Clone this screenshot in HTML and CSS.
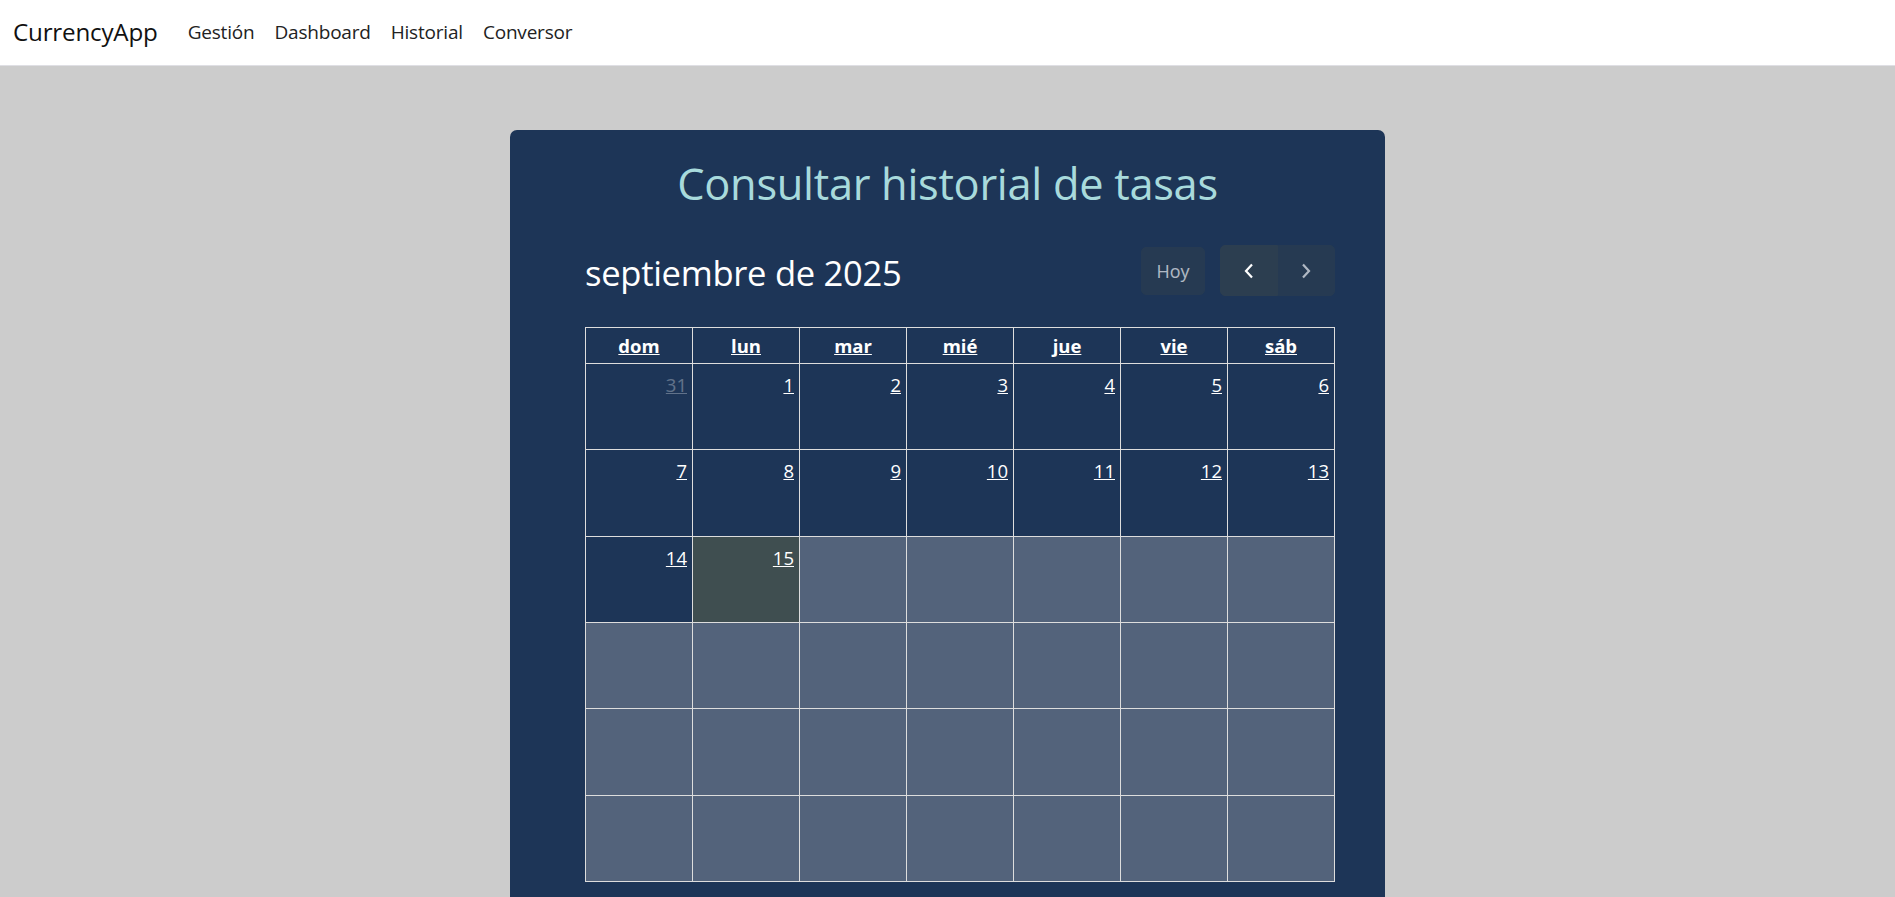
FILE: index.html
```html
<!DOCTYPE html>
<html lang="es">
<head>
<meta charset="utf-8">
<title>CurrencyApp - Historial</title>
<link rel="stylesheet" href="styles.css">
</head>
<body>
<nav class="navbar">
  <a class="brand" href="#">CurrencyApp</a>
  <ul class="nav-links">
    <li><a href="#">Gestión</a></li>
    <li><a href="#">Dashboard</a></li>
    <li><a href="#">Historial</a></li>
    <li><a href="#">Conversor</a></li>
  </ul>
</nav>
<main class="page">
  <section class="card">
    <h1 class="card-title">Consultar historial de tasas</h1>
    <div class="calendar">
      <div class="toolbar">
        <h2 class="cal-title">septiembre de 2025</h2>
        <div class="toolbar-actions">
          <button class="btn btn-today" disabled>Hoy</button>
          <div class="btn-group">
            <button class="btn btn-icon btn-prev" aria-label="Anterior">
              <svg width="12" height="16" viewBox="0 0 12 16"><path d="M9 1.5 L3 8 L9 14.5" fill="none" stroke="currentColor" stroke-width="2.2"/></svg>
            </button>
            <button class="btn btn-icon btn-next" disabled aria-label="Siguiente">
              <svg width="12" height="16" viewBox="0 0 12 16"><path d="M3 1.5 L9 8 L3 14.5" fill="none" stroke="currentColor" stroke-width="2.2"/></svg>
            </button>
          </div>
        </div>
      </div>
      <table class="month">
        <thead>
          <tr>
            <th><a href="#">dom</a></th>
            <th><a href="#">lun</a></th>
            <th><a href="#">mar</a></th>
            <th><a href="#">mié</a></th>
            <th><a href="#">jue</a></th>
            <th><a href="#">vie</a></th>
            <th><a href="#">sáb</a></th>
          </tr>
        </thead>
        <tbody>
          <tr>
            <td class="other"><a href="#">31</a></td>
            <td><a href="#">1</a></td>
            <td><a href="#">2</a></td>
            <td><a href="#">3</a></td>
            <td><a href="#">4</a></td>
            <td><a href="#">5</a></td>
            <td><a href="#">6</a></td>
          </tr>
          <tr>
            <td><a href="#">7</a></td>
            <td><a href="#">8</a></td>
            <td><a href="#">9</a></td>
            <td><a href="#">10</a></td>
            <td><a href="#">11</a></td>
            <td><a href="#">12</a></td>
            <td><a href="#">13</a></td>
          </tr>
          <tr>
            <td><a href="#">14</a></td>
            <td class="today"><a href="#">15</a></td>
            <td class="disabled"></td>
            <td class="disabled"></td>
            <td class="disabled"></td>
            <td class="disabled"></td>
            <td class="disabled"></td>
          </tr>
          <tr>
            <td class="disabled"></td><td class="disabled"></td><td class="disabled"></td><td class="disabled"></td><td class="disabled"></td><td class="disabled"></td><td class="disabled"></td>
          </tr>
          <tr>
            <td class="disabled"></td><td class="disabled"></td><td class="disabled"></td><td class="disabled"></td><td class="disabled"></td><td class="disabled"></td><td class="disabled"></td>
          </tr>
          <tr>
            <td class="disabled"></td><td class="disabled"></td><td class="disabled"></td><td class="disabled"></td><td class="disabled"></td><td class="disabled"></td><td class="disabled"></td>
          </tr>
        </tbody>
      </table>
    </div>
  </section>
</main>
</body>
</html>
```

FILE: styles.css
```css
* { box-sizing: border-box; }

html, body {
  margin: 0;
  padding: 0;
}

body {
  background: #cccccc;
  font-family: "Open Sans", "Noto Sans", "Liberation Sans", sans-serif;
  font-size: 20px;
  line-height: 1.5;
  color: #212529;
  overflow: hidden;
}

a { text-decoration: none; }

/* Navbar */
.navbar {
  height: 66px;
  background: #ffffff;
  border-bottom: 1px solid #dfdfe4;
  display: flex;
  align-items: center;
  padding: 0 13px;
}

.brand {
  font-size: 24.2px;
  color: #111111;
  margin-right: 20px;
  letter-spacing: -0.2px;
}

.nav-links {
  list-style: none;
  display: flex;
  margin: 0;
  padding: 0;
}

.nav-links a {
  display: block;
  padding: 8px 10px;
  font-size: 19px;
  color: #222222;
  letter-spacing: -0.2px;
}

/* Page */
.page {
  padding-top: 64px;
}

.card {
  width: 875px;
  margin: 0 auto;
  background: #1d3557;
  border-radius: 7px 7px 0 0;
  padding: 28px 50px 16px 75px;
}

.card-title {
  margin: 0 0 0 -25px;
  text-align: center;
  font-size: 43.4px;
  font-weight: 400;
  line-height: 1.2;
  color: #a8dadc;
  letter-spacing: -0.3px;
}

.calendar {
  margin-top: 35px;
}

.toolbar {
  display: flex;
  justify-content: space-between;
  align-items: center;
  margin-bottom: 31px;
}

.cal-title {
  margin: 0;
  padding-top: 5px;
  font-size: 34.6px;
  font-weight: 400;
  line-height: 1.2;
  color: #ffffff;
  letter-spacing: -0.3px;
}

.toolbar-actions {
  display: flex;
  align-items: center;
  gap: 15px;
}

.btn {
  font-family: inherit;
  font-size: 18px;
  line-height: 30px;
  color: #ffffff;
  background: #2c3e50;
  border: 1px solid #2c3e50;
  border-radius: 5px;
  padding: 8px 12px;
  cursor: pointer;
}

.btn:disabled {
  opacity: 0.65;
  cursor: default;
}

.btn-today {
  width: 64px;
  height: 48px;
  padding: 0;
}

.btn-group {
  display: flex;
}

.btn-icon {
  width: 57.5px;
  height: 51px;
  padding: 0;
  display: flex;
  align-items: center;
  justify-content: center;
}

.btn-prev {
  border-radius: 5px 0 0 5px;
}

.btn-next {
  border-radius: 0 5px 5px 0;
}

/* Month table */
.month {
  width: 750px;
  table-layout: fixed;
  border-collapse: collapse;
  border: 1px solid #dddddd;
}

.month th,
.month td {
  border: 1px solid #dddddd;
}

.month th {
  height: 36px;
  padding: 1px 4px 0;
  text-align: center;
  font-weight: 700;
  font-size: 18.5px;
  line-height: 30px;
}

.month th a {
  color: #ffffff;
  text-decoration: underline;
}

.month td {
  height: 86.3px;
  padding: 6px 5px 4px;
  text-align: right;
  vertical-align: top;
  font-size: 18.5px;
  line-height: 30px;
}

.month td a {
  color: #ffffff;
  text-decoration: underline;
}

.month td.other a {
  opacity: 0.3;
}

.month td.today {
  background: #3f4e50;
}

.month td.disabled {
  background: #53637b;
}
```
